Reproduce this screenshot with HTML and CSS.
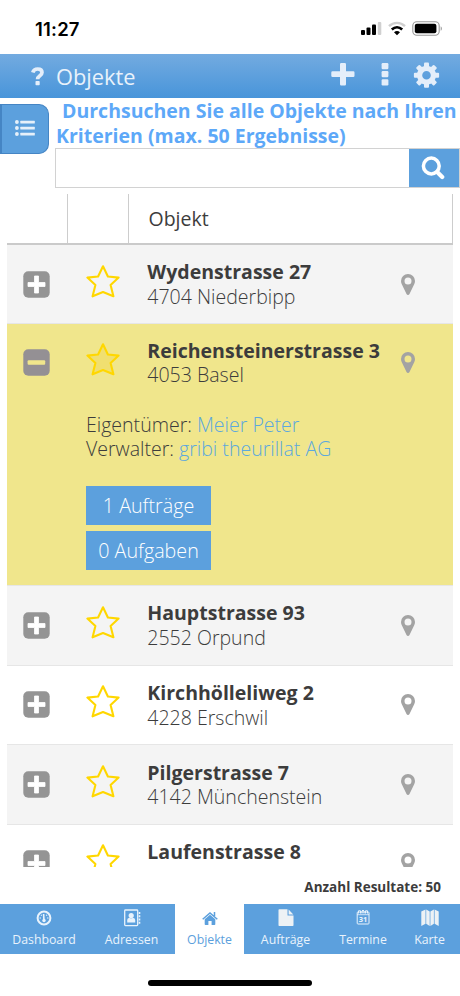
FILE: index.html
```html
<!DOCTYPE html>
<html lang="de">
<head>
    <meta charset="UTF-8">
    <meta name="viewport" content="width=device-width, initial-scale=1.0">
    <title>Objekte</title>
    <link rel="stylesheet" href="styles.css">
</head>
<body>
    <svg class="sprite" width="0" height="0">
        <symbol id="plus" viewBox="0 0 27 27">
            <rect x=".3" y=".3" width="26.4" height="26.4" rx="5" fill="#949494"/>
            <path d="M11.500 5h4v6.500H22v4h-6.500V22h-4v-6.500H5v-4h6.500z" fill="#fff" stroke="#fff" stroke-width=".8" stroke-linejoin="round"/>
        </symbol>
        <symbol id="minus" viewBox="0 0 27 27">
            <rect x=".3" y=".3" width="26.4" height="26.4" rx="5" fill="#949094"/>
            <rect x="4.600" y="11.200" width="17.600" height="4.600" rx="1" fill="#f0e68c"/>
        </symbol>
        <symbol id="star" viewBox="0 0 34 34">
            <path d="M17 2.300l4.900 10.200 10.700 1.100-8 7.500 2.800 11.200L17 28l-10.400 4.300 2.800-11.200-8-7.500 10.700-1.100z" stroke="#ffd700" stroke-width="2.100" stroke-linejoin="round"/>
        </symbol>
        <symbol id="pin" viewBox="0 0 14 21">
            <path fill-rule="evenodd" d="M7 0a7 7 0 0 1 7 7c0 1.300-.3 2.200-.8 3.200L8.500 20c-.6 1.300-2.400 1.300-3 0L.8 10.200C.3 9.200 0 8.300 0 7a7 7 0 0 1 7-7zM7 3.600a3.500 3.500 0 1 0 0 7 3.500 3.500 0 0 0 0-7z" fill="#a3a3a3"/>
        </symbol>
    </svg>

    <div class="status">
        <span class="time">11:27</span>
        <svg class="signals" width="84" height="16" viewBox="0 0 84 16">
            <rect x="1" y="9" width="4" height="5" rx="1"/>
            <rect x="6.500" y="6.500" width="4" height="7.500" rx="1"/>
            <rect x="12" y="3.500" width="4" height="10.500" rx="1"/>
            <rect x="17.800" y="1" width="3.500" height="13" rx="1" fill="#d0d0d0"/>
            <path d="M29 5.200c4.700-4.500 11.300-4.500 16 0" fill="none" stroke="#cfcfcf" stroke-width="2.400"/>
            <path d="M31.800 8.500c3.200-3 7.200-3 10.400 0" fill="none" stroke="#000" stroke-width="2.600"/>
            <path d="M34 11.300c1.900-1.700 4.100-1.700 6 0l-3 3z"/>
            <rect x="52.800" y=".8" width="26.400" height="13.400" rx="4" fill="none" stroke="#999" stroke-width="1.100"/>
            <rect x="54.800" y="2.800" width="21.600" height="9.400" rx="2"/>
            <path d="M80.700 5.200v4.600c1.600-.8 1.600-3.800 0-4.600z" fill="#999"/>
        </svg>
    </div>

    <div class="header">
        <svg class="help" width="14" height="19" viewBox="0 0 14 19">
            <path d="M1.800 5.600C2.500 3 4.300 2 6.700 2 9.300 2 11 3.400 11 5.500c0 3.500-4.400 3.100-4.400 6.800" fill="none" stroke="#e4eefa" stroke-width="3.700"/>
            <rect x="4.500" y="14" width="4.200" height="4.200" rx=".8" fill="#e4eefa"/>
        </svg>
        <h1>Objekte</h1>
        <svg class="actions" width="112" height="28" viewBox="0 0 112 28" fill="#e4eefa">
            <path d="M10.200 3h3.600q1.200 0 1.200 1.200V11.200h7.300q1.200 0 1.200 1.200v3.400q0 1.200-1.200 1.200H15v7.200q0 1.200-1.200 1.200h-3.600q-1.200 0-1.200-1.200V17H1.500Q.3 17 .3 15.800v-3.400q0-1.200 1.200-1.200H9V4.200Q9 3 10.200 3z"/>
            <rect x="50.600" y="3" width="6.800" height="6.200" rx="1.200"/>
            <rect x="50.600" y="11" width="6.800" height="6.200" rx="1.200"/>
            <rect x="50.600" y="19.300" width="6.800" height="6.200" rx="1.200"/>
            <g transform="translate(95.500 15.200)">
                <circle r="6.900" fill="none" stroke="#e4eefa" stroke-width="5.200"/>
                <g id="teeth">
                    <rect x="-2.500" y="-12.600" width="5" height="5" rx="1"/>
                    <rect x="-2.500" y="7.600" width="5" height="5" rx="1"/>
                </g>
                <use href="#teeth" transform="rotate(45)"/>
                <use href="#teeth" transform="rotate(90)"/>
                <use href="#teeth" transform="rotate(135)"/>
            </g>
        </svg>
    </div>

    <div class="search">
        <button class="list-button">
            <svg width="20" height="16" viewBox="0 0 20 16" fill="#e6f0fa">
                <circle cx="1.900" cy="2" r="1.900"/>
                <circle cx="1.900" cy="8" r="1.900"/>
                <circle cx="1.900" cy="14" r="1.900"/>
                <rect x="5.300" y=".7" width="14.500" height="2.700" rx=".5"/>
                <rect x="5.300" y="6.700" width="14.500" height="2.700" rx=".5"/>
                <rect x="5.300" y="12.700" width="14.500" height="2.700" rx=".5"/>
            </svg>
        </button>
        <div class="search-main">
            <h2><span>Durchsuchen Sie alle Objekte nach Ihren</span><br>Kriterien (max. 50 Ergebnisse)</h2>
            <div class="search-box">
                <input type="text">
                <button class="search-button">
                    <svg width="24" height="24" viewBox="0 0 24 24" fill="none" stroke="#fff">
                        <circle cx="10.300" cy="10" r="7.900" stroke-width="3.500"/>
                        <path d="M16.200 16l5 5" stroke-width="4.200" stroke-linecap="round"/>
                    </svg>
                </button>
            </div>
        </div>
    </div>

    <div class="list">
        <div class="list-head">
            <div></div>
            <div></div>
            <div class="head-title">Objekt</div>
        </div>
        <div class="row odd first">
            <svg class="toggle"><use href="#plus"/></svg>
            <svg class="star"><use href="#star"/></svg>
            <div class="address"><b>Wydenstrasse 27</b><span>4704 Niederbipp</span></div>
            <svg class="pin"><use href="#pin"/></svg>
        </div>
        <div class="row open">
            <svg class="toggle"><use href="#minus"/></svg>
            <svg class="star filled"><use href="#star"/></svg>
            <div class="address"><b>Reichensteinerstrasse 3</b><span>4053 Basel</span></div>
            <svg class="pin"><use href="#pin"/></svg>
            <div class="details">
                <p>Eigentümer: <a href="#">Meier Peter</a></p>
                <p>Verwalter: <a href="#">gribi theurillat AG</a></p>
                <button>1 Aufträge</button>
                <button>0 Aufgaben</button>
            </div>
        </div>
        <div class="row odd">
            <svg class="toggle"><use href="#plus"/></svg>
            <svg class="star"><use href="#star"/></svg>
            <div class="address"><b>Hauptstrasse 93</b><span>2552 Orpund</span></div>
            <svg class="pin"><use href="#pin"/></svg>
        </div>
        <div class="row">
            <svg class="toggle"><use href="#plus"/></svg>
            <svg class="star"><use href="#star"/></svg>
            <div class="address"><b>Kirchhölleliweg 2</b><span>4228 Erschwil</span></div>
            <svg class="pin"><use href="#pin"/></svg>
        </div>
        <div class="row odd">
            <svg class="toggle"><use href="#plus"/></svg>
            <svg class="star"><use href="#star"/></svg>
            <div class="address"><b>Pilgerstrasse 7</b><span>4142 Münchenstein</span></div>
            <svg class="pin"><use href="#pin"/></svg>
        </div>
        <div class="row">
            <svg class="toggle"><use href="#plus"/></svg>
            <svg class="star"><use href="#star"/></svg>
            <div class="address"><b>Laufenstrasse 8</b></div>
            <svg class="pin"><use href="#pin"/></svg>
        </div>
    </div>

    <div class="count">Anzahl Resultate: 50</div>

    <div class="tabs">
        <a href="#">
            <svg width="18" height="18" viewBox="0 0 18 18" fill="none" stroke="#e9f3fc">
                <circle cx="9" cy="9" r="6.400" stroke-width="2"/>
                <path d="M9 12L8.600 5" stroke-width="1.600"/>
                <circle cx="9" cy="11.500" r="1.700" fill="#e9f3fc" stroke="none"/>
                <path d="M4.500 9h1.500M12 9h1.500M6 5.800l.8.900M12 5.800l-.8.900" stroke-width="1.200"/>
            </svg>
            Dashboard
        </a>
        <a href="#">
            <svg width="18" height="18" viewBox="0 0 18 18" fill="#e9f3fc">
                <rect x="1.700" y="1" width="13" height="15.600" rx=".8" fill="none" stroke="#e9f3fc" stroke-width="1.300"/>
                <path d="M15.700 3h1.600v2h-1.600zM15.700 6.300h1.600v2h-1.600zM15.700 9.600h1.600v2h-1.600zM15.700 12.800h1.600v2h-1.600z"/>
                <circle cx="8.200" cy="6.500" r="2.600"/>
                <path d="M4.200 13.500V11q0-2 2.300-2.300 1.700 1 3.400 0 2.300.3 2.300 2.300v2.500z"/>
            </svg>
            Adressen
        </a>
        <a href="#" class="active">
            <svg width="18" height="18" viewBox="0 0 18 18" fill="#5ca0dd">
                <path d="M9 5.800l5.300 4.500v4.900q0 .8-.8.800h-2.900v-4H7.400v4H4.500q-.8 0-.8-.8v-4.900z"/>
                <path d="M1.700 10.300L9 4l7.300 6.300M13.500 3v4" fill="none" stroke="#5ca0dd" stroke-width="1.500"/>
            </svg>
            Objekte
        </a>
        <a href="#">
            <svg width="18" height="18" viewBox="0 0 18 18" fill="#edf2f5">
                <path d="M2.800.2h7.700v6.300h6v9.700q0 .8-.8.800H2.300q-.8 0-.8-.8V1q0-.8.8-.8zM11.600.5l4.700 4.900h-4.700z"/>
            </svg>
            Aufträge
        </a>
        <a href="#">
            <svg width="18" height="18" viewBox="0 0 18 18" fill="none" stroke="#e9f3fc">
                <rect x="3.200" y="3" width="11.800" height="12" rx=".8"/>
                <path d="M3 5.700h12" stroke-width=".8"/>
                <path d="M4.500 4.500V2q1-2 2 0v2.500M8 4.500V2q1-2 2 0v2.500M11.500 4.500V2q1-2 2 0v2.500" stroke-width="1"/>
                <text x="9.100" y="13" class="day">31</text>
            </svg>
            Termine
        </a>
        <a href="#">
            <svg width="18" height="18" viewBox="0 0 18 18" fill="#edf2f5">
                <path d="M.3 2.600L4.500.4v14.400L.3 17zM5.200.4l3.500 2.200V17l-3.500-2.200zM9.400 2.600L12.900.4v14.400L9.400 17zM13.600.4l4.100 2.200V17l-4.100-2.200z"/>
            </svg>
            Karte
        </a>
    </div>
    <div class="home-bar"></div>
</body>
</html>
```
FILE: styles.css
```css
* {
    box-sizing: border-box;
}
body {
    margin: 0;
    width: 460px;
    height: 996px;
    overflow: hidden;
    display: flex;
    flex-direction: column;
    background: #fff;
    color: #3c3c3c;
    font-family: "Open Sans", sans-serif;
}
svg {
    flex-shrink: 0;
}
.sprite {
    position: absolute;
}
button {
    font-family: inherit;
    padding: 0;
    border: none;
}
a {
    text-decoration: none;
    color: #5ca8de;
}
.status {
    height: 54px;
    display: flex;
    justify-content: space-between;
    padding: 17px 16px 0 35px;
}
.time {
    font: 600 18.5px/24px Inter, sans-serif;
    letter-spacing: 0.2px;
    color: #000;
}
.signals {
    margin-top: 4px;
}
.header {
    height: 44px;
    display: flex;
    align-items: flex-start;
    background: linear-gradient(#73abe0, #4895da);
    color: #e9f2fb;
}
.help {
    margin: 13px 0 0 31px;
}
.header h1 {
    flex: 1;
    margin: 8px 0 0 11px;
    font-size: 21.8px;
    font-weight: 400;
    line-height: 30px;
}
.actions {
    margin: 6px 17px 0 0;
}
.search {
    height: 96px;
    display: flex;
}
.list-button {
    flex-shrink: 0;
    width: 49px;
    height: 50px;
    margin: 6px 7px 0 0;
    padding-top: 2px;
    background: #5ca0dd;
    border: 1px solid #4585c4;
    border-left-width: 2px;
    border-radius: 0 10px 10px 0;
}
.search-main {
    flex: 1;
    min-width: 0;
}
.search h2 {
    height: 50px;
    margin: 0;
    padding-top: 1px;
    font-size: 19.5px;
    line-height: 24.5px;
    color: #5da8f8;
    white-space: nowrap;
}
.search h2 span {
    margin-left: 6px;
}
.search-box {
    display: flex;
    height: 40px;
    margin-left: -1px;
    border: 1px solid #d2d2d2;
}
.search-box input {
    flex: 1;
    min-width: 0;
    border: none;
}
.search-button {
    width: 50px;
    background: #5ca0dd;
    padding: 4px 2px 0 0;
}
.list {
    width: 446px;
    height: 673px;
    margin-left: 7px;
    overflow: hidden;
}
.list-head {
    display: grid;
    grid-template-columns: 61px 61px 1fr;
    height: 51px;
    border-bottom: 2px solid #cacaca;
}
.list-head div {
    border-right: 1px solid #cdcdcd;
}
.list-head .head-title {
    padding: 10px 0 0 19.5px;
    font-size: 19.5px;
    line-height: 30px;
}
.row {
    display: grid;
    grid-template-columns: 79px 61.3px 1fr 52px;
    grid-template-rows: 78px;
    border-bottom: 1px solid #e6e6e6;
    height: 79.6px;
}
.odd {
    background: #f4f4f4;
}
.first {
    height: 78.6px;
}
.open {
    height: 262.5px;
    background: #f0e68c;
}
.toggle {
    width: 27px;
    height: 27px;
    margin: 25.5px 0 0 16px;
}
.star {
    width: 34px;
    height: 34px;
    margin: 18.5px 0 0;
    fill: none;
}
.filled {
    fill: #f0df70;
}
.pin {
    width: 14px;
    height: 21px;
    margin: 28.5px 0 0;
}
.address {
    padding-top: 15.4px;
    font-size: 19.55px;
    line-height: 24.5px;
    white-space: nowrap;
}
.address b {
    display: block;
}
.address span {
    font-weight: 300;
}
.details {
    grid-column: 1 / -1;
    padding: 11px 0 0 79px;
    font-size: 19.55px;
    font-weight: 300;
}
.details p {
    margin: 0;
    line-height: 24.5px;
}
.details button {
    display: block;
    width: 125px;
    height: 39px;
    margin-top: 6px;
    background: #5ca0dd;
    color: #fff;
    font-size: 19.7px;
    font-weight: 300;
}
.details p + button {
    margin-top: 24px;
}
.count {
    height: 37px;
    padding: 10px 19px 0 0;
    font-size: 13.5px;
    font-weight: 700;
    line-height: 20px;
    text-align: right;
}
.tabs {
    display: grid;
    grid-template-columns: 88px 87px 69px 83px 72px 61px;
    height: 50px;
    background: #5ca0dd;
}
.tabs a {
    display: flex;
    flex-direction: column;
    align-items: center;
    padding-top: 5px;
    font-size: 12.3px;
    line-height: 18px;
    gap: 4px;
    color: #e9f3fc;
}
.tabs .active {
    background: #fff;
    color: #5ca0dd;
}
.day {
    fill: #e9f3fc;
    stroke: none;
    font-size: 7.5px;
    font-weight: 700;
    text-anchor: middle;
}
.home-bar {
    width: 164px;
    height: 6px;
    margin: 26px 0 0 148px;
    border-radius: 3px;
    background: #000;
}
```
